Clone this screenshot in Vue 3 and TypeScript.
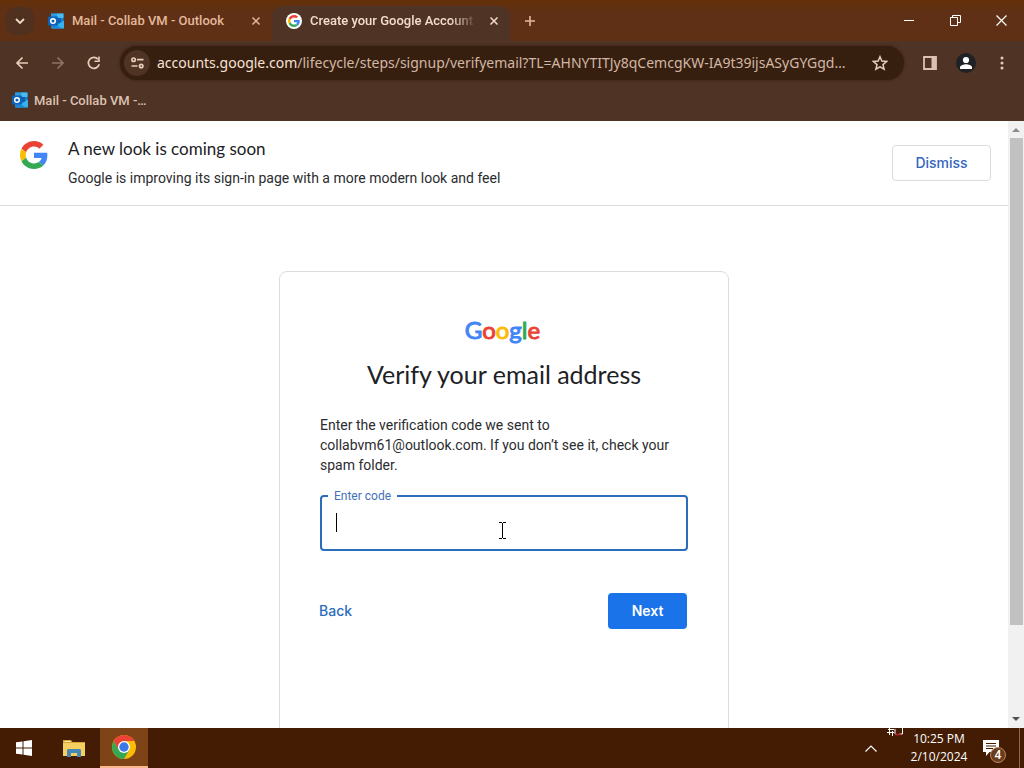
<script setup lang="ts">
import { ref } from 'vue'

interface Tab {
  title: string
  icon: 'outlook' | 'google'
  active: boolean
}

const tabs = ref<Tab[]>([
  { title: 'Mail - Collab VM - Outlook', icon: 'outlook', active: false },
  { title: 'Create your Google Account', icon: 'google', active: true },
])
const host = 'accounts.google.com'
const path = '/lifecycle/steps/signup/verifyemail?TL=AHNYTITJy8qCemcgKW-IA9t39ijsASyGYGgd…'
const wordmark: { letter: string; tone: string }[] = [
  { letter: 'G', tone: 'blue' },
  { letter: 'o', tone: 'red' },
  { letter: 'o', tone: 'yellow' },
  { letter: 'g', tone: 'blue' },
  { letter: 'l', tone: 'green' },
  { letter: 'e', tone: 'red' },
]
const code = ref('')
</script>

<template>
  <div class="desktop">
    <svg class="defs" width="0" height="0" aria-hidden="true">
      <symbol id="g-logo" viewBox="0 0 48 48">
        <path fill="#ea4335" d="M24 9.5c3.54 0 6.71 1.22 9.21 3.6l6.85-6.85C35.9 2.38 30.47 0 24 0 14.62 0 6.51 5.38 2.56 13.22l7.98 6.19C12.43 13.72 17.74 9.5 24 9.5z" />
        <path fill="#4285f4" d="M46.98 24.55c0-1.57-.15-3.09-.38-4.55H24v9.02h12.94c-.58 2.96-2.26 5.48-4.78 7.18l7.73 6c4.51-4.18 7.09-10.36 7.09-17.65z" />
        <path fill="#fbbc05" d="M10.53 28.59A14.5 14.5 0 0 1 9.77 24c0-1.6.27-3.14.76-4.59l-7.98-6.19A23.9 23.9 0 0 0 0 24c0 3.88.92 7.54 2.56 10.78l7.97-6.19z" />
        <path fill="#34a853" d="M24 48c6.48 0 11.93-2.13 15.89-5.81l-7.73-6c-2.15 1.45-4.92 2.3-8.16 2.3-6.26 0-11.57-4.22-13.47-9.91l-7.98 6.19C6.51 42.62 14.62 48 24 48z" />
      </symbol>
      <symbol id="outlook" viewBox="0 0 16 16">
        <path fill="#1a84d2" d="M3 .5h12.500v14H3z" />
        <path fill="#2a9be0" d="M3 .5h6v4.500H3z" />
        <path fill="#45bdf0" d="M9 .5h6.500v4.500H9z" />
        <path fill="#0f5fae" d="M9 5h4v5H9z" />
        <path fill="#35b2ee" d="M16 7.500v8H3.500z" />
        <path fill="#1f87d8" d="M3 9v6.500h11z" />
        <rect y="3.500" width="10" height="9" rx=".7" fill="#0c63b8" />
        <circle cx="5" cy="8" r="2.300" fill="none" stroke="#fff" stroke-width="1.500" />
      </symbol>
    </svg>

    <header class="chrome">
      <div class="tabstrip">
        <button class="tab-search" aria-label="Search tabs">
          <svg width="10" height="6" viewBox="0 0 10 6"><path d="M1 1l4 4 4-4" fill="none" stroke="#f1dccb" stroke-width="1.800" /></svg>
        </button>
        <div v-for="tab in tabs" :key="tab.title" class="tab" :class="{ active: tab.active }">
          <svg v-if="tab.icon === 'outlook'" width="16" height="16"><use href="#outlook" /></svg>
          <span v-else class="g-disc"><svg width="12" height="12"><use href="#g-logo" /></svg></span>
          <span class="tab-title">{{ tab.title }}</span>
          <button class="tab-close" :aria-label="'Close ' + tab.title">
            <svg width="10" height="10" viewBox="0 0 10 10"><path d="M1.500 1.500l7 7m0-7l-7 7" stroke="currentColor" stroke-width="1.500" /></svg>
          </button>
        </div>
        <button class="new-tab" aria-label="New tab">
          <svg width="12" height="12" viewBox="0 0 12 12"><path d="M6 1v10M1 6h10" stroke="#e3b99c" stroke-width="1.600" /></svg>
        </button>
        <div class="window-buttons">
          <button aria-label="Minimize"><svg width="11" height="11" viewBox="0 0 11 11"><path d="M0 5.500h10" stroke="#fff" /></svg></button>
          <button aria-label="Restore"><svg width="11" height="11" viewBox="0 0 11 11"><path d="M.5 2.500h7v8h-7zM2.500 2.500v-2h8v7h-3" fill="none" stroke="#fff" /></svg></button>
          <button aria-label="Close"><svg width="11" height="11" viewBox="0 0 11 11"><path d="M.5.5l10 10m0-10l-10 10" stroke="#fff" stroke-width="1.200" /></svg></button>
        </div>
      </div>

      <div class="toolbar">
        <button class="nav" aria-label="Back">
          <svg width="14" height="14" viewBox="0 0 14 14"><path d="M13 7H2m5.500-5.500L2 7l5.500 5.500" fill="none" stroke="#e8cdb9" stroke-width="1.700" /></svg>
        </button>
        <button class="nav" aria-label="Forward" disabled>
          <svg width="14" height="14" viewBox="0 0 14 14"><path d="M1 7h11M6.500 1.500L12 7l-5.500 5.500" fill="none" stroke="#8d7465" stroke-width="1.700" /></svg>
        </button>
        <button class="nav" aria-label="Reload">
          <svg width="14" height="14" viewBox="0 0 14 14"><path d="M12.200 8.300A5.500 5.500 0 1 1 11 3.200" fill="none" stroke="#e8cdb9" stroke-width="1.700" /><path d="M12.800.5V6H7.500V4.400h3.700V.5z" fill="#e8cdb9" /></svg>
        </button>
        <div class="omnibox">
          <button class="site-info" aria-label="View site information">
            <svg width="13" height="12" viewBox="0 0 13 12"><g fill="none" stroke="#e8cdb9" stroke-width="1.700"><circle cx="2.600" cy="2.700" r="1.700" /><path d="M6 2.700h6.500M.5 9h6" /><circle cx="10.200" cy="9" r="1.700" /></g></svg>
          </button>
          <span class="url"><span class="host">{{ host }}</span>{{ path }}</span>
          <button class="star" aria-label="Bookmark this tab">
            <svg width="16" height="16" viewBox="0 0 16 16"><path d="M8 1.700l1.850 4.400 4.750.4-3.600 3.100 1.100 4.650L8 11.800l-4.100 2.450L5 9.600 1.400 6.500l4.750-.4z" fill="none" stroke="#e8cdb9" stroke-width="1.500" /></svg>
          </button>
        </div>
        <button class="tool" aria-label="Side panel">
          <svg width="14" height="14" viewBox="0 0 14 14"><path d="M1 1h12v12H1z" fill="none" stroke="#dcc2b1" stroke-width="1.800" /><path d="M8.500 1H13v12H8.500z" fill="#dcc2b1" /></svg>
        </button>
        <button class="tool" aria-label="Profile">
          <svg width="20" height="20" viewBox="0 0 20 20"><circle cx="10" cy="10" r="10" fill="#202124" /><circle cx="10" cy="7" r="3.100" fill="#fff" /><path d="M4 16v-1.800c0-2 4-3 6-3s6 1 6 3V16z" fill="#fff" /></svg>
        </button>
        <button class="tool" aria-label="Menu">
          <svg width="4" height="14" viewBox="0 0 4 14" fill="#e8cdb9"><circle cx="2" cy="2" r="1.500" /><circle cx="2" cy="7" r="1.500" /><circle cx="2" cy="12" r="1.500" /></svg>
        </button>
      </div>

      <nav class="bookmarks">
        <a href="#mail"><svg width="16" height="16"><use href="#outlook" /></svg>Mail - Collab VM -…</a>
      </nav>
    </header>

    <div class="viewport">
      <main class="page">
        <section class="banner">
          <svg width="28" height="28"><use href="#g-logo" /></svg>
          <div class="banner-text">
            <h2>A new look is coming soon</h2>
            <p>Google is improving its sign-in page with a more modern look and feel</p>
          </div>
          <button class="dismiss">Dismiss</button>
        </section>

        <form class="card" @submit.prevent>
          <div class="wordmark" role="img" aria-label="Google">
            <span v-for="(l, i) in wordmark" :key="i" :class="l.tone">{{ l.letter }}</span>
          </div>
          <h1>Verify your email address</h1>
          <p class="intro">Enter the verification code we sent to collabvm61@outlook.com. If you don’t see it, check your spam folder.</p>
          <div class="field">
            <input id="code" v-model="code" type="text" autocomplete="off" />
            <label for="code">Enter code</label>
            <span class="caret"></span>
            <svg class="pointer" width="7" height="17" viewBox="0 0 7 17"><path d="M0 .5h3M4 .5h3M3.500 1v15M0 16.500h3M4 16.500h3" fill="none" stroke="#000" /></svg>
          </div>
          <div class="actions">
            <a href="#back">Back</a>
            <button type="submit" class="next">Next</button>
          </div>
        </form>
      </main>
      <div class="scrollbar">
        <svg width="8" height="4" viewBox="0 0 8 4"><path d="M0 4l4-4 4 4z" fill="#8b8b8b" /></svg>
        <div class="track"><div class="thumb"></div></div>
        <svg width="8" height="4" viewBox="0 0 8 4"><path d="M0 0l4 4 4-4z" fill="#505050" /></svg>
      </div>
    </div>

    <footer class="taskbar">
      <button class="task" aria-label="Start">
        <svg width="16" height="16" viewBox="0 0 16 16" fill="#fff"><path d="M0 2.300L6.500 1.400v6.100H0zM7.500 1.200L16 0v7.500H7.500zM0 8.500h6.500v6.100L0 13.700zM7.500 8.500H16V16l-8.500-1.200z" /></svg>
      </button>
      <button class="task" aria-label="File Explorer">
        <svg width="22" height="18" viewBox="0 0 22 18"><path d="M0 1h8l1.500 2H22v14H0z" fill="#d9a436" /><path d="M0 4h22v13H0z" fill="#f5d060" /><path d="M1.500 2h6v1h-6z" fill="#fff0b0" /><path d="M4 18v-7l1-1h12l1 1v7h-4v-4H8v4z" fill="#4588b5" /></svg>
      </button>
      <button class="task open" aria-label="Google Chrome">
        <svg width="24" height="24" viewBox="0 0 24 24"><circle cx="12" cy="12" r="12" fill="#fbbc05" /><path d="M1.610 6A12 12 0 0 1 22.390 6H12L6.800 15z" fill="#ea4335" /><path d="M1.610 6A12 12 0 0 0 12 24L17.200 15 12 17.500 6.800 15z" fill="#34a853" /><circle cx="12" cy="12" r="6" fill="#fff" /><circle cx="12" cy="12" r="4.700" fill="#3b78e7" /></svg>
      </button>
      <svg class="tray-fragment" width="17" height="8" viewBox="0 0 17 8"><path d="M1 1.500h6M0 4.500h7M2.500 0v7M5.500 3v5M15.500 0v6h-3M8 1v5" fill="none" stroke="#fff" /><path d="M8 6.500h6" fill="none" stroke="#c52432" stroke-width="1.500" /></svg>
      <button class="tray-up" aria-label="Show hidden icons">
        <svg width="12" height="7" viewBox="0 0 12 7"><path d="M.5 6.500L6 1l5.500 5.500" fill="none" stroke="#fff" stroke-width="1.200" /></svg>
      </button>
      <div class="clock"><time>10:25 PM</time><span>2/10/2024</span></div>
      <button class="notes" aria-label="4 notifications">
        <svg width="16" height="16" viewBox="0 0 16 16"><path d="M0 0h16v12H6.500L3 16v-4H0z" fill="#fff" /><path d="M3 3.500h10M3 6h10M3 8.500h7" stroke="#431c03" /></svg>
        <span class="count">4</span>
      </button>
      <div class="show-desktop"></div>
    </footer>
  </div>
</template>

<style>
body {
  margin: 0;
  overflow: hidden;
}
</style>

<style scoped>
.desktop {
  display: flex;
  flex-direction: column;
  height: 100vh;
  font-family: Roboto, "Liberation Sans", sans-serif;
  background: #fff;
}
.desktop * { box-sizing: border-box; }
.defs { position: absolute; }
svg { flex: none; }
button {
  display: inline-flex;
  align-items: center;
  justify-content: center;
  flex: none;
  border: 0;
  padding: 0;
  background: none;
  color: inherit;
  font: inherit;
}
h1, h2, p { margin: 0; }
a { text-decoration: none; }

.chrome { background: #4f3324; }
.tabstrip {
  display: flex;
  height: 41px;
  padding-left: 6px;
  align-items: center;
  background: linear-gradient(#653008, #5f3016 30%, #5f3014);
}
.tab-search {
  width: 28px;
  height: 28px;
  border-radius: 10px;
  background: #50301e;
}
.tab {
  display: flex;
  align-items: center;
  gap: 8px;
  width: 238px;
  height: 35px;
  margin-top: 6px;
  padding: 0 11px 6px 14px;
  border-radius: 10px 10px 0 0;
  color: #e3b99c;
  font-size: 13px;
  font-weight: 500;
}
.tab.active {
  background: #4f3324;
  color: #f3ddcd;
}
.tab-title {
  flex: 1;
  overflow: hidden;
  white-space: nowrap;
}
.tab.active .tab-title {
  mask-image: linear-gradient(to right, #000 82%, transparent 98%);
}
.tab-close { width: 10px; height: 16px; }
.g-disc {
  display: grid;
  place-items: center;
  flex: none;
  width: 16px;
  height: 16px;
  border-radius: 50%;
  background: #fff;
}
.new-tab { width: 28px; height: 28px; margin-left: 6px; }
.window-buttons { display: flex; margin-left: auto; }
.window-buttons button { width: 46px; height: 40px; }

.toolbar {
  display: flex;
  align-items: center;
  height: 44px;
  padding: 0 4px;
}
.nav { width: 36px; height: 34px; }
.omnibox {
  display: flex;
  align-items: center;
  flex: 1;
  min-width: 0;
  height: 34px;
  margin: 0 8px;
  padding: 0 16px 0 4px;
  border-radius: 17px;
  background: #371f10;
  box-shadow: 0 0 3px #371f10;
  color: #d1b7a5;
  font-family: "Noto Sans", "Open Sans", sans-serif;
  font-size: 14px;
}
.site-info {
  width: 26px;
  height: 26px;
  border-radius: 50%;
  background: #4f3324;
}
.url {
  flex: 1;
  min-width: 0;
  margin-left: 7px;
  padding-bottom: 1px;
  white-space: nowrap;
}
.host { color: #f6e2d4; }
.tool { width: 36px; height: 34px; }
.bookmarks {
  display: flex;
  height: 36px;
  padding: 0 12px 6px;
}
.bookmarks a {
  display: flex;
  align-items: center;
  gap: 6px;
  color: #dcc2b1;
  font-size: 13px;
  font-weight: 500;
}

.viewport {
  display: flex;
  flex: 1;
  min-height: 0;
}
.page {
  flex: 1;
  min-width: 0;
  overflow: hidden;
  color: #2b2c2f;
}
.banner {
  display: flex;
  align-items: flex-start;
  gap: 20px;
  padding: 16px 17px 16px 20px;
  border-bottom: 1px solid #dadce0;
}
.banner > svg { margin-top: 4px; }
.banner-text { flex: 1; font-size: 14px; line-height: 20px; }
.banner-text h2 {
  margin-bottom: 7px;
  color: #202124;
  font-family: Lato, sans-serif;
  font-size: 17px;
  font-weight: 400;
  line-height: 24px;
}
.banner-text p { padding-bottom: 1px; }
.dismiss {
  width: 99px;
  height: 36px;
  margin-top: 8px;
  padding-bottom: 2px;
  border: 1px solid #dadce0;
  border-radius: 4px;
  color: #3465c0;
  font-family: Inter, sans-serif;
  font-size: 14px;
  font-weight: 500;
}
.card {
  width: 450px;
  height: 500px;
  margin: 65px auto 0;
  padding: 44px 40px;
  border: 1px solid #dadce0;
  border-radius: 8px;
}
.wordmark {
  height: 32px;
  padding-right: 3px;
  font-family: Lato, sans-serif;
  font-size: 24px;
  line-height: 28px;
  text-align: center;
}
.wordmark span { -webkit-text-stroke: 1px currentColor; }
.blue { color: #4285f4; }
.red { color: #ea4335; }
.yellow { color: #fbbc05; }
.green { color: #34a853; }
h1 {
  color: #202124;
  font-family: Lato, sans-serif;
  font-size: 25px;
  font-weight: 400;
  line-height: 52px;
  text-align: center;
}
.intro { margin-top: 15px; font-size: 14px; line-height: 20px; }
.field { position: relative; margin-top: 20px; }
.field input {
  display: block;
  width: 100%;
  height: 56px;
  padding: 0 14px;
  border: 2px solid #2a6ebb;
  border-radius: 4px;
  outline: 0;
  background: #fff;
  font-size: 16px;
}
.field label {
  position: absolute;
  top: -7px;
  left: 8px;
  padding: 0 6px;
  background: #fff;
  color: #4470b8;
  font-size: 12px;
  line-height: 16px;
}
.caret {
  position: absolute;
  top: 18px;
  left: 16px;
  width: 1px;
  height: 19px;
  background: #000;
}
.pointer { position: absolute; top: 27px; left: 179px; }
.actions {
  display: flex;
  align-items: center;
  justify-content: space-between;
  margin: 42px 1px 0 -1px;
  font-family: Inter, sans-serif;
  font-size: 14px;
}
.actions a { padding-bottom: 2px; color: #2a6ebb; font-weight: 500; }
.next {
  width: 79px;
  height: 36px;
  padding-bottom: 2px;
  border-radius: 4px;
  background: #1a73e8;
  color: #fff;
  font-weight: 600;
}
.scrollbar {
  display: flex;
  flex-direction: column;
  align-items: center;
  width: 16px;
  padding: 7px 0;
  background: #f1f1f1;
}
.track { flex: 1; width: 13px; margin: 6px 0; }
.thumb { height: 85%; background: #c1c1c1; }

.taskbar {
  position: relative;
  display: flex;
  align-items: center;
  height: 40px;
  background: #431c03;
  color: #fff;
}
.task { width: 48px; height: 40px; }
.task + .task { width: 52px; }
.task.task.open {
  width: 48px;
  border-bottom: 2px solid #fbb88c;
  background: #7e4317;
}
.tray-fragment { position: absolute; top: 0; right: 120px; }
.tray-up { width: 24px; height: 40px; margin-left: auto; }
.clock {
  display: flex;
  flex-direction: column;
  align-items: center;
  width: 64px;
  margin-left: 24px;
  font-family: "Open Sans", sans-serif;
  font-size: 12px;
  line-height: 18px;
}
.clock time, .clock span { white-space: nowrap; }
.notes { position: relative; width: 48px; height: 40px; padding-right: 8px; }
.count {
  position: absolute;
  top: 19px;
  left: 19px;
  width: 16px;
  height: 16px;
  border: 1px solid #b98464;
  border-radius: 50%;
  background: #6d3c1b;
  font-size: 12px;
  font-weight: 500;
  line-height: 14px;
}
.show-desktop { width: 5px; height: 40px; border-left: 1px solid #8a6a55; }
</style>
